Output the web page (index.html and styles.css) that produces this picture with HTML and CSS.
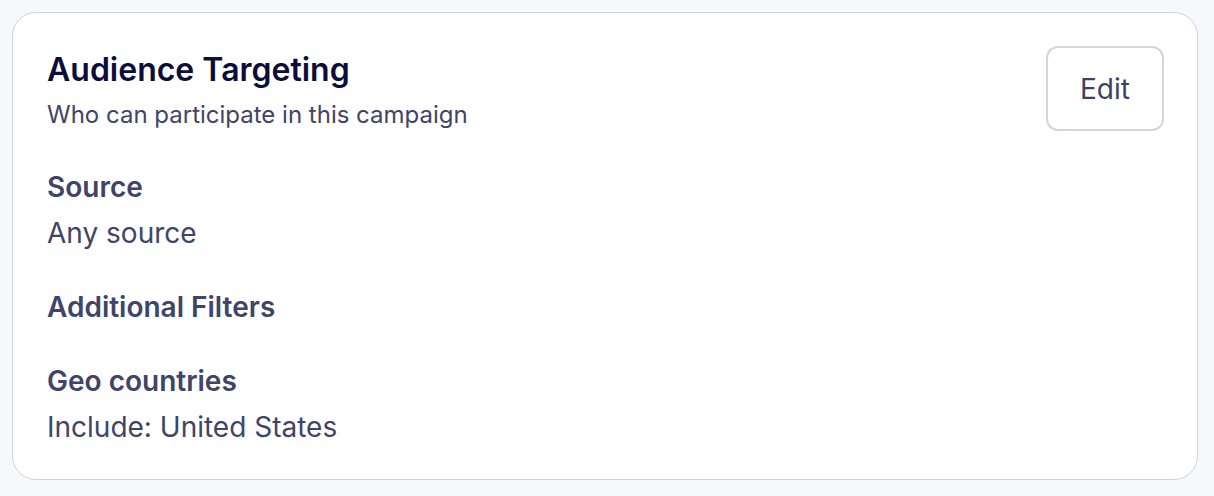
FILE: index.html
```html
<!DOCTYPE html>
<html lang="en">
<head>
    <meta charset="UTF-8">
    <meta name="viewport" content="width=device-width, initial-scale=1.0">
    <title>Audience Targeting</title>
    <link rel="stylesheet" href="styles.css">
</head>
<body>
    <div class="card">
        <div class="card-header">
            <div class="card-heading">
                <h2>Audience Targeting</h2>
                <p class="subtitle">Who can participate in this campaign</p>
            </div>
            <button class="btn-edit">Edit</button>
        </div>

        <div class="section">
            <div class="section-label">Source</div>
            <div class="section-value">Any source</div>
        </div>
        <div class="section">
            <div class="section-label">Additional Filters</div>
        </div>
        <div class="section">
            <div class="section-label">Geo countries</div>
            <div class="section-value">Include: United States</div>
        </div>
    </div>
</body>
</html>
```

FILE: styles.css
```css
body {
    margin: 0;
    padding: 12px 16px 15px 12px;
    background-color: #f7f8fc;
    font-family: Inter, "Noto Sans", sans-serif;
}
.card {
    background-color: #fff;
    border: 1.5px solid #cfd2dc;
    border-radius: 24px;
    padding: 33px 33px 35px 34px;
}
.card-header {
    display: flex;
    justify-content: space-between;
    align-items: flex-start;
}
.card-heading h2 {
    margin: 0;
    font-size: 32px;
    line-height: 48px;
    font-weight: 600;
    color: #0b0d3b;
}
.subtitle {
    margin: 0;
    font-size: 24px;
    line-height: 42px;
    color: #414469;
}
.btn-edit {
    width: 118px;
    height: 85px;
    background: #fff;
    border: 2px solid #d3d5df;
    border-radius: 12px;
    font-family: inherit;
    font-size: 28px;
    color: #3e4166;
    cursor: pointer;
}
.section {
    margin-top: 40px;
}
.card-header + .section {
    margin-top: 34px;
}
.section-label {
    font-size: 28px;
    font-weight: 600;
    line-height: 34px;
    color: #414469;
}
.section-value {
    margin-top: 12px;
    font-size: 28px;
    line-height: 34px;
    color: #414469;
}
```
